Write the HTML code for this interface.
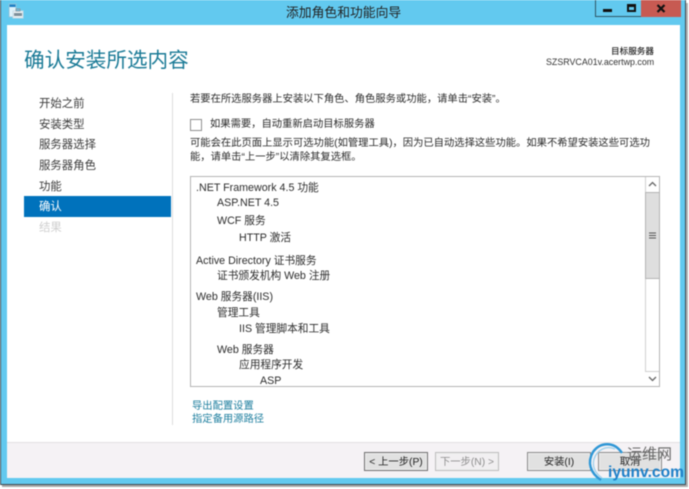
<!DOCTYPE html>
<html lang="zh-CN">
<head>
<meta charset="utf-8">
<style>
html,body{margin:0;padding:0;background:#fff}
#w{position:relative;width:689px;height:489px;overflow:hidden;background:#fff;font-family:"Liberation Sans","Noto Sans CJK SC",sans-serif;filter:blur(.45px)}
#w div{position:absolute;box-sizing:border-box}
.t{white-space:nowrap;line-height:14px;height:14px;font-size:10.3px;color:#2c2c2c;margin-top:2px}
.n{left:39px;font-size:11.4px;color:#3c3c3c;margin-top:1px}
.l{font-size:10.7px;margin-top:1px}
.b{background:#e1e1e1;border:1px solid #8a8a8a;box-shadow:inset 0 0 0 1px #eee;text-align:center;line-height:19px;font-size:10.3px;color:#222;height:19px;top:452px;width:64px;white-space:nowrap}
</style>
</head>
<body>
<div id="w">
  <!-- window frame -->
  <div style="left:0;top:0;width:686px;height:485px;background:#62c9ef;border-left:1px solid #3b4a52;border-right:1px solid #3f4a50;border-bottom:1px solid #3f4a50"></div>
  <div style="left:2px;top:485px;width:686px;height:2px;background:#aaa"></div>
  <div style="left:686px;top:3px;width:2px;height:484px;background:#b5b5b5"></div>
  <div style="left:7px;top:25px;width:673px;height:453px;background:#fff"></div>
  <div style="left:7px;top:442px;width:673px;height:36px;background:#f5f2f5;border-top:1px solid #e2dfe2"></div>

  <!-- app icon -->
  <svg style="position:absolute;left:8px;top:3px" width="16" height="16" viewBox="0 0 16 16">
    <rect x="1" y="1" width="7" height="13" fill="#dff2fb" stroke="#8cc4dc" stroke-width="1"/>
    <rect x="1.5" y="1.5" width="6" height="2.5" fill="#1f7fc4"/>
    <rect x="5" y="8" width="10" height="7" fill="#eef3f5" stroke="#c8dce6"/>
    <rect x="6" y="10" width="8" height="3" fill="#7d8f9a"/>
    <rect x="8" y="6" width="4" height="2" fill="none" stroke="#8a9aa5"/>
  </svg>

  <!-- title -->
  <div class="t" style="left:286px;top:5px;font-size:12.8px;color:#222;margin-top:1px">添加角色和功能向导</div>

  <!-- window controls -->
  <div style="left:595px;top:0;width:25px;height:17px;background:#62c9ef;border:1px solid #2f5666;border-top:0"></div>
  <div style="left:619px;top:0;width:23px;height:17px;background:#62c9ef;border:1px solid #2f5666;border-top:0;border-left:0"></div>
  <div style="left:641px;top:0;width:40px;height:17px;background:#c75a52"></div>
  <div style="left:603px;top:9px;width:9px;height:3px;background:#111"></div>
  <div style="left:627px;top:4px;width:9px;height:8px;border:2px solid #111;border-top-width:3px"></div>
  <svg style="position:absolute;left:656px;top:4px" width="10" height="9" viewBox="0 0 10 9"><path d="M1.500 1L8.500 8M8.500 1L1.500 8" stroke="#111" stroke-width="2.200" fill="none"/></svg>

  <!-- heading -->
  <div class="t" style="left:24px;top:44px;height:30px;line-height:30px;font-size:20.6px;color:#1a7a96;margin-top:1.500px">确认安装所选内容</div>
  <div class="t" style="right:35px;top:44px;font-size:8.600px;color:#222;font-weight:500;margin-top:0">目标服务器</div>
  <div class="t" style="left:546px;top:55px;font-size:8.900px;color:#333;margin-top:0">SZSRVCA01v.acertwp.com</div>

  <!-- side nav -->
  <div style="left:24px;top:196px;width:147px;height:21px;background:#0072bc"></div>
  <div style="left:172px;top:93px;width:1px;height:332px;background:#dcdcdc"></div>
  <div class="t n" style="top:96px">开始之前</div>
  <div class="t n" style="top:117px">安装类型</div>
  <div class="t n" style="top:137px">服务器选择</div>
  <div class="t n" style="top:158px">服务器角色</div>
  <div class="t n" style="top:179px">功能</div>
  <div class="t n" style="top:199px;color:#fff">确认</div>
  <div class="t n" style="top:220px;color:#cfcfcf">结果</div>

  <!-- main text -->
  <div class="t" style="left:190px;top:91px">若要在所选服务器上安装以下角色、角色服务或功能，请单击“安装”。</div>
  <div style="left:190px;top:119px;width:12px;height:12px;border:1px solid #8f8f8f;background:#fff"></div>
  <div class="t" style="left:210px;top:116px">如果需要，自动重新启动目标服务器</div>
  <div class="t" style="left:190px;top:135px">可能会在此页面上显示可选功能(如管理工具)，因为已自动选择这些功能。如果不希望安装这些可选功</div>
  <div class="t" style="left:190px;top:149px">能，请单击“上一步”以清除其复选框。</div>

  <!-- list box -->
  <div style="left:190px;top:176px;width:470px;height:211px;border:1px solid #b4b4b4;background:#fff;overflow:hidden">
    <div class="t l" style="left:5px;top:3px">.NET Framework 4.5 功能</div>
    <div class="t l" style="left:26px;top:18px">ASP.NET 4.5</div>
    <div class="t l" style="left:26px;top:36px">WCF 服务</div>
    <div class="t l" style="left:48px;top:53px">HTTP 激活</div>
    <div class="t l" style="left:5px;top:76px">Active Directory 证书服务</div>
    <div class="t l" style="left:26px;top:91px">证书颁发机构 Web 注册</div>
    <div class="t l" style="left:5px;top:112px">Web 服务器(IIS)</div>
    <div class="t l" style="left:26px;top:128px">管理工具</div>
    <div class="t l" style="left:48px;top:144px">IIS 管理脚本和工具</div>
    <div class="t l" style="left:26px;top:165px">Web 服务器</div>
    <div class="t l" style="left:48px;top:180px">应用程序开发</div>
    <div class="t l" style="left:69px;top:196px">ASP</div>
    <!-- scrollbar -->
    <div style="left:454px;top:0;width:15px;height:209px;background:#fff;border-left:1px solid #d0d0d0;border-right:1px solid #d0d0d0"></div>
    <div style="left:454px;top:15px;width:15px;height:87px;background:#dedede;border:1px solid #b4b4b4"></div>
    <div style="left:454px;top:194px;width:15px;height:15px;background:#fff;border-top:1px solid #d0d0d0"></div>
    <svg style="position:absolute;left:457px;top:4px" width="9" height="6" viewBox="0 0 9 6"><path d="M1 5L4.500 1.500L8 5" stroke="#666" stroke-width="1.300" fill="none"/></svg>
    <svg style="position:absolute;left:457px;top:199px" width="9" height="6" viewBox="0 0 9 6"><path d="M1 1L4.500 4.500L8 1" stroke="#666" stroke-width="1.300" fill="none"/></svg>
    <svg style="position:absolute;left:458px;top:55px" width="7" height="7" viewBox="0 0 7 7"><path d="M0 1H7M0 3.500H7M0 6H7" stroke="#555" stroke-width="1" fill="none"/></svg>
  </div>

  <!-- links -->
  <div class="t" style="left:192px;top:398px;color:#1f7f9f">导出配置设置</div>
  <div class="t" style="left:192px;top:411px;color:#1f7f9f">指定备用源路径</div>

  <!-- buttons -->
  <div class="b" style="left:364px;border-color:#6f6f6f">&lt; 上一步(P)</div>
  <div class="b" style="left:435px;background:#f1eff1;border-color:#bdbdbd;color:#8e8e8e">下一步(N) &gt;</div>
  <div class="b" style="left:527px;width:64px">安装(I)</div>
  <div class="b" style="left:598px;width:64px">取消</div>

  <!-- watermark -->
  <svg style="position:absolute;left:582px;top:440px" width="60" height="49" viewBox="0 0 60 49">
    <path d="M40 13C32 1 18 2 11 12C5 22 8 33 19 40" stroke="#2f97d6" stroke-width="2.400" fill="none"/>
    <path d="M33 9C24 5 15 10 12 19C10 27 13 33 20 38" stroke="#9fd0ea" stroke-width="1.300" fill="none"/>
  </svg>
  <div class="t" style="left:627px;top:444px;height:22px;line-height:22px;font-size:15px;color:#666;margin-top:0">运维网</div>
  <div class="t" style="left:608px;top:464px;height:18px;line-height:18px;font-size:15.600px;font-weight:bold;color:#1f80c8;margin-top:0">iyunv.com</div>
</div>
</body>
</html>
